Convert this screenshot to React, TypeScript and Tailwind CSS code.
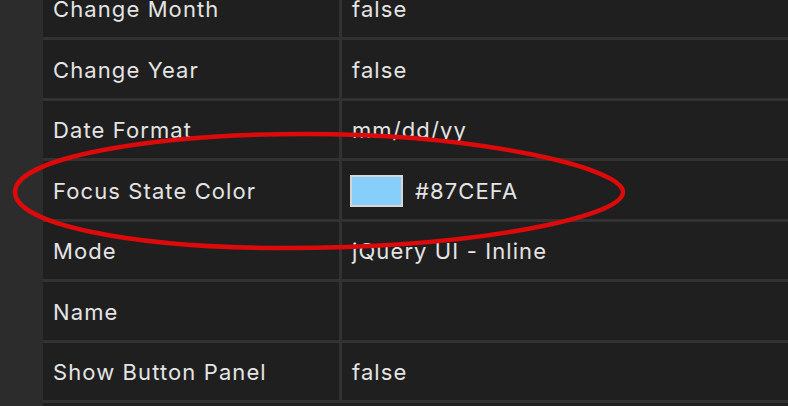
import React from 'react';

type Row = {
  label: string;
  value?: string;
  color?: string;
};

const rows: Row[] = [
  { label: 'Change Month', value: 'false' },
  { label: 'Change Year', value: 'false' },
  { label: 'Date Format', value: 'mm/dd/yy' },
  { label: 'Focus State Color', value: '#87CEFA', color: '#87CEFA' },
  { label: 'Mode', value: 'jQuery UI - Inline' },
  { label: 'Name' },
  { label: 'Show Button Panel', value: 'false' },
];

function PropertyRow({ row }: { row: Row }) {
  return (
    <div className="flex h-[60.5px] shrink-0 border-b-[3px] border-[#323232]">
      <div className="flex w-[299px] shrink-0 items-center pl-[10px] pt-[3px] border-r-[3px] border-[#323232]">
        {row.label}
      </div>
      <div className="flex flex-1 items-center gap-[12px] pl-[8px] pt-[3px]">
        {row.color ? (
          <span
            className="block h-[32px] w-[53px] border-2 border-[#d6d6d6]"
            style={{ backgroundColor: row.color }}
          />
        ) : null}
        {row.value && <span className={row.color ? '' : 'pl-[2px]'}>{row.value}</span>}
      </div>
    </div>
  );
}

export default function App() {
  return (
    <div className="relative flex h-[406px] w-[788px] overflow-hidden bg-[#1f1f1f] font-['Inter',sans-serif] text-[22px] tracking-[1.1px] text-[#e4e4e4]">
      {/* gutter */}
      <div className="w-[43px] shrink-0 bg-[#2c2c2c]" />

      {/* property grid, scrolled */}
      <div className="-mt-[20.5px] flex flex-1 flex-col">
        {rows.map((r) => (
          <PropertyRow key={r.label} row={r} />
        ))}
      </div>

      {/* annotation ellipse */}
      <svg
        className="pointer-events-none absolute inset-0"
        width="788"
        height="406"
        viewBox="0 0 788 406"
      >
        <path
          d="M15 192 C15 158 150 134 305 134 C480 134 623 168 623 192 C623 218 470 248 285 248 C130 248 15 224 15 192 Z"
          fill="none"
          stroke="#dc0a0a"
          strokeWidth="4.5"
        />
      </svg>
    </div>
  );
}
